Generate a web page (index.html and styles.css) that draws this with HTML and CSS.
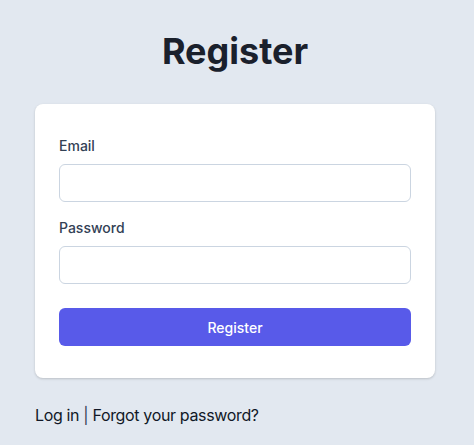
FILE: index.html
```html
<!DOCTYPE html>
<html lang="en">
<head>
    <meta charset="UTF-8">
    <meta name="viewport" content="width=device-width, initial-scale=1.0">
    <title>Register</title>
    <link rel="stylesheet" href="styles.css">
</head>
<body>
    <div class="wrap">
        <h1 class="title">Register</h1>

        <form class="card">
            <div class="field">
                <label for="email">Email</label>
                <input type="email" id="email">
            </div>
            <div class="field">
                <label for="password">Password</label>
                <input type="password" id="password">
            </div>
            <button type="submit" class="submitBtn">Register</button>
        </form>

        <p class="links"><a href="#">Log in</a> <span class="sep">|</span> <a href="#">Forgot your password?</a></p>
    </div>
</body>
</html>
```

FILE: styles.css
```css
body {
    margin: 0;
    padding-right: 4px;
    background-color: #e2e8f0;
    font-family: Inter, "Noto Sans", sans-serif;
    color: #111827;
}

.wrap {
    width: 400px;
    margin: 0 auto;
    padding-top: 31px;
}

.title {
    margin: 0 0 33px;
    text-align: center;
    font-size: 36px;
    line-height: 40px;
    font-weight: 700;
    color: #1a202c;
}

.card {
    background-color: #fff;
    border-radius: 8px;
    padding: 32px 24px;
    box-shadow: 0 1px 3px rgba(0, 0, 0, 0.12), 0 1px 2px rgba(0, 0, 0, 0.06);
}

.field {
    display: flex;
    flex-direction: column;
    gap: 8px;
    margin-bottom: 16px;
}

.field:last-of-type {
    margin-bottom: 24px;
}

label {
    font-size: 14px;
    line-height: 20px;
    font-weight: 500;
    color: #334155;
}

input {
    box-sizing: border-box;
    height: 38px;
    border: 1px solid #cbd5e1;
    border-radius: 6px;
    padding: 0 12px;
    font: inherit;
    font-size: 14px;
}

.submitBtn {
    display: block;
    width: 100%;
    height: 38px;
    border: none;
    border-radius: 6px;
    background-color: #585ae9;
    color: #fff;
    font-family: inherit;
    font-size: 14px;
    font-weight: 500;
    cursor: pointer;
}

.links {
    margin: 25px 0 0;
    font-size: 16px;
    line-height: 24px;
    letter-spacing: -0.35px;
}

.links a {
    color: #111827;
    text-decoration: none;
}

.sep {
    color: #374151;
}
```
